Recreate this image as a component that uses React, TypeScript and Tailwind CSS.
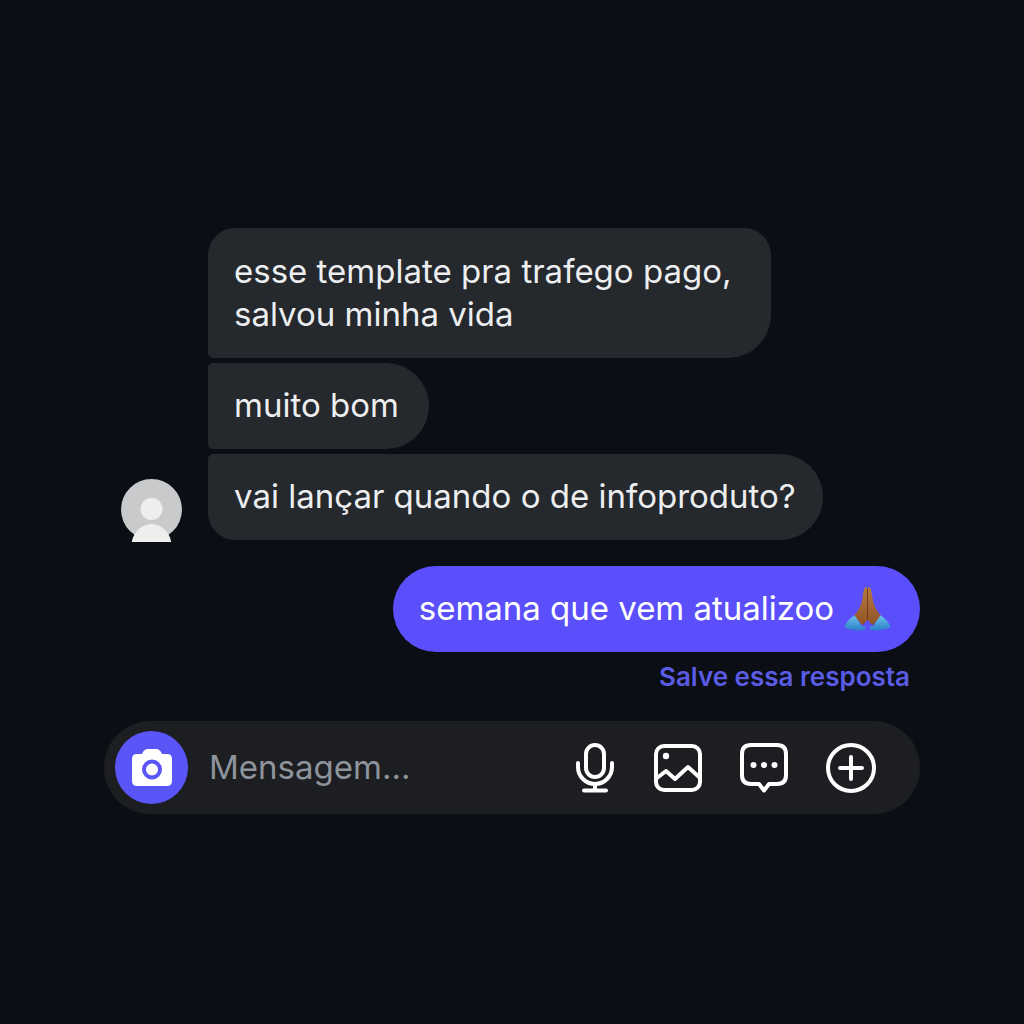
function Bubble({ children, className }: { children: React.ReactNode; className: string }) {
  return (
    <div className={`px-[26px] py-[21.5px] text-[33px] leading-[43.5px] text-[#eceef0] bg-[#25282d] ${className}`}>
      {children}
    </div>
  );
}

function Avatar() {
  return (
    <div className="w-[62px] h-[63px] -mb-[2px] overflow-hidden shrink-0">
      <svg viewBox="0 0 62 63" className="w-full h-full">
        <circle cx="30.500" cy="30.500" r="30.500" fill="#c9cacc" />
        <circle cx="30.500" cy="30" r="11" fill="#eeeeee" />
        <ellipse cx="30.500" cy="67" rx="20" ry="22" fill="#eeeeee" />
      </svg>
    </div>
  );
}

function PrayEmoji() {
  return (
    <svg viewBox="0 0 48 48" className="w-[47px] h-[47px] shrink-0 -mt-[2px]">
      <defs>
        <linearGradient id="skin" x1="0" y1="0" x2="0" y2="1">
          <stop offset="0" stopColor="#b8793f" />
          <stop offset="1" stopColor="#8f5426" />
        </linearGradient>
        <linearGradient id="cuff" x1="0" y1="0" x2="0" y2="1">
          <stop offset="0" stopColor="#6cc0ee" />
          <stop offset="1" stopColor="#2a80c6" />
        </linearGradient>
      </defs>
      <path d="M23.500 2 C20.500 2 20 5 19 13 C18 21 14 27 10 32 L19 41 L23.500 36Z" fill="url(#skin)" />
      <path d="M24.500 2 C27.500 2 28 5 29 13 C30 21 34 27 38 32 L29 41 L24.500 36Z" fill="url(#skin)" />
      <path d="M23.500 4 H24.500 V36 H23.500Z" fill="#6e3f1c" />
      <path d="M10.500 31 C6 34 2 38 0.500 43 C5 46 15 47 21 46 L22 42 L18 42 C15.500 38 13 34 10.500 31Z" fill="url(#cuff)" />
      <path d="M37.500 31 C42 34 46 38 47.500 43 C43 46 33 47 27 46 L26 42 L30 42 C32.500 38 35 34 37.500 31Z" fill="url(#cuff)" />
    </svg>
  );
}

function CameraIcon() {
  return (
    <svg viewBox="0 0 40 37" className="w-[40px] h-[37px]">
      <path
        fill="#ffffff"
        fillRule="evenodd"
        d="M5 5 H10 C11 2 13 0 16 0 H24 C27 0 29 2 30 5 H35 Q40 5 40 10 V32 Q40 37 35 37 H5 Q0 37 0 32 V10 Q0 5 5 5Z M20 10.500 A10 10 0 1 0 20 30.500 A10 10 0 1 0 20 10.500Z M20 14.500 A6 6 0 1 1 20 26.500 A6 6 0 1 1 20 14.500Z"
      />
    </svg>
  );
}

function MicIcon() {
  return (
    <svg viewBox="0 0 38 50" className="w-[38px] h-[50px]" fill="none" stroke="#fff" strokeWidth="4" strokeLinecap="round" strokeLinejoin="round">
      <rect x="10" y="2" width="18" height="32" rx="9" />
      <path d="M2 20 V24 A17 17 0 0 0 36 24 V20" />
      <path d="M19 41 V47.500 M8 47.500 H30" />
    </svg>
  );
}

function ImageIcon() {
  return (
    <svg viewBox="0 0 48 48" className="w-[48px] h-[48px]" fill="none" stroke="#fff" strokeWidth="4" strokeLinecap="round" strokeLinejoin="round">
      <rect x="2" y="2" width="44" height="44" rx="8" />
      <circle cx="12" cy="12" r="3.200" fill="#fff" stroke="none" />
      <path d="M3 34 L12 27 L21 35 L34 23 L45 33" />
    </svg>
  );
}

function CommentIcon() {
  return (
    <svg viewBox="0 0 48 50" className="w-[48px] h-[50px]" fill="none" stroke="#fff" strokeWidth="4" strokeLinecap="round" strokeLinejoin="round">
      <path d="M11 2 H37 Q46 2 46 11 V32 Q46 41 37 41 H29 L24 47.500 L19 41 H11 Q2 41 2 32 V11 Q2 2 11 2Z" />
      <circle cx="13.500" cy="22" r="3" fill="#fff" stroke="none" />
      <circle cx="24" cy="22" r="3" fill="#fff" stroke="none" />
      <circle cx="34.500" cy="22" r="3" fill="#fff" stroke="none" />
    </svg>
  );
}

function PlusIcon() {
  return (
    <svg viewBox="0 0 50 50" className="w-[50px] h-[50px]" fill="none" stroke="#fff" strokeWidth="4" strokeLinecap="round">
      <circle cx="25" cy="25" r="23" />
      <path d="M25 14 V36 M14 25 H36" />
    </svg>
  );
}

export default function App() {
  return (
    <div
      className="flex h-screen flex-col bg-[#0b0e14] px-[104px] pt-[228px]"
      style={{ fontFamily: "Inter, 'Noto Sans', sans-serif" }}
    >
      <div className="flex items-end gap-[25px] pl-[17px]">
        <Avatar />
        <div className="flex flex-col items-start gap-[4.5px]">
          <Bubble className="pr-[39px] rounded-t-[27px] rounded-br-[43px] rounded-bl-[5px]">
            esse template pra trafego pago,
            <br />
            salvou minha vida
          </Bubble>
          <Bubble className="pr-[30px] rounded-tl-[5px] rounded-r-[43px] rounded-bl-[5px]">muito bom</Bubble>
          <Bubble className="pr-[27px] rounded-tl-[5px] rounded-r-[43px] rounded-bl-[27px]">vai lançar quando o de infoproduto?</Bubble>
        </div>
      </div>

      <div className="mt-[26px] self-end flex items-center gap-[10px] rounded-[43px] bg-[#5a4ffb] pl-[26px] pr-[29px] h-[86px] text-[33px] tracking-[-0.02px] text-white">
        <span>semana que vem atualizoo</span>
        <PrayEmoji />
      </div>
      <p className="mt-[9px] self-end pr-[10px] text-[26px] leading-[31px] font-semibold text-[#5b5ce6]">Salve essa resposta</p>

      <div className="mt-[29px] flex items-center h-[93px] rounded-full bg-[#1c1e21] pl-[11px] pr-[44px]">
        <div className="flex h-[73px] w-[73px] items-center justify-center rounded-full bg-[#5a55f7]">
          <CameraIcon />
        </div>
        <span className="ml-[21px] text-[33px] text-[#8e949b]">Mensagem...</span>
        <div className="ml-auto flex items-center gap-[38px]">
          <div className="mr-[2px]">
            <MicIcon />
          </div>
          <ImageIcon />
          <CommentIcon />
          <PlusIcon />
        </div>
      </div>
    </div>
  );
}
